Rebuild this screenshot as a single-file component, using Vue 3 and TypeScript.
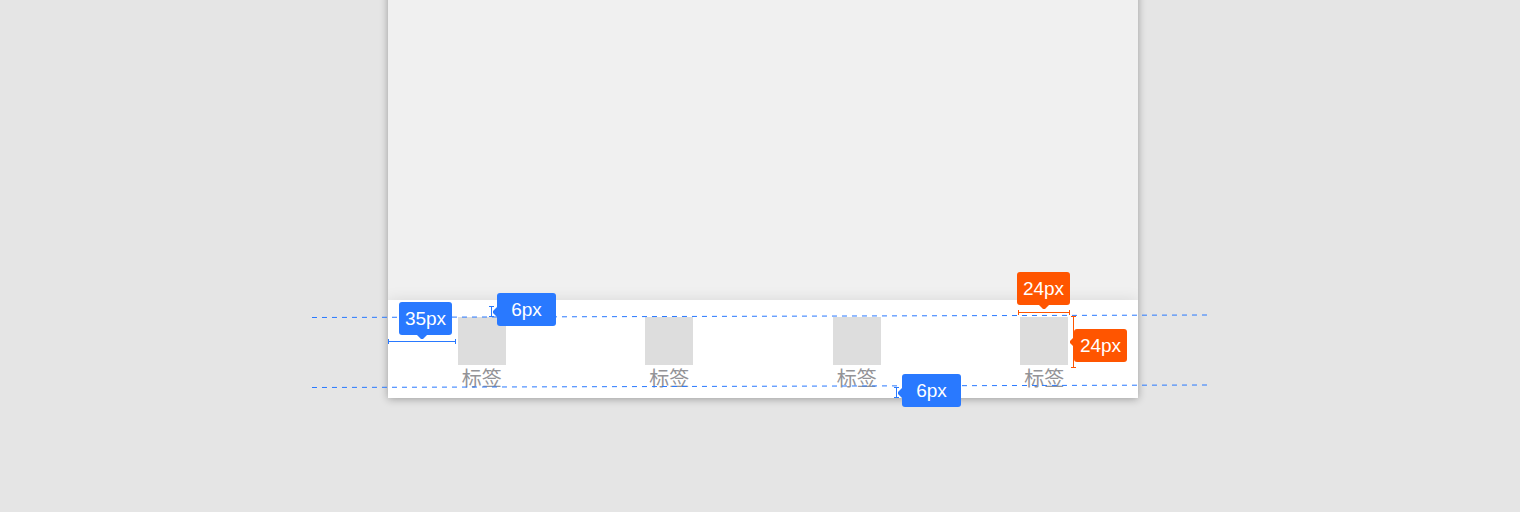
<script setup lang="ts">
interface Tab { id: number; label: string }
interface Callout { id: string; text: string; place: string; tone: string; arrow: string }

const tabs: Tab[] = [1, 2, 3, 4].map((id) => ({ id, label: '标签' }))

const callouts: Callout[] = [
  { id: 'inset', text: '35px', place: 'at-inset', tone: 'blue', arrow: 'down' },
  { id: 'top', text: '6px', place: 'at-top', tone: 'blue wide', arrow: 'left' },
  { id: 'bottom', text: '6px', place: 'at-bottom', tone: 'blue wide', arrow: 'left' },
  { id: 'width', text: '24px', place: 'at-width', tone: 'orange', arrow: 'down' },
  { id: 'height', text: '24px', place: 'at-height', tone: 'orange', arrow: 'left low' },
]
</script>

<template>
  <main class="stage">
    <section class="phone">
      <div class="screen"></div>
      <nav class="tabbar">
        <a v-for="tab in tabs" :key="tab.id" class="tab" href="#">
          <span class="icon"></span>
          <span class="label">{{ tab.label }}</span>
        </a>
      </nav>
      <svg class="guides" width="896" height="140" viewBox="0 0 896 140" fill="none" aria-hidden="true">
        <g class="dash">
          <path d="M0 57.5 L895 55" />
          <path d="M0 127.5 L895 125" />
        </g>
        <g class="blue-line">
          <path d="M76.5 79v5M76 81.5h68M143.5 79v5" />
          <path d="M177 46.5h5M179.5 46v11M177 56.5h5" />
          <path d="M582 127.5h5M584.5 127v11M582 137.5h5" />
        </g>
        <g class="orange-line">
          <path d="M706.5 50v5M706 52.5h52M757.5 50v5" />
          <path d="M759 56.5h5M761.5 56v52M759 107.5h5" />
        </g>
      </svg>
      <span v-for="c in callouts" :key="c.id" class="callout" :class="[c.place, c.tone, c.arrow]">{{ c.text }}</span>
    </section>
  </main>
</template>

<style>
body {
  margin: 0;
  background: #e5e5e5;
}
</style>

<style scoped>
.stage {
  display: flex;
  justify-content: center;
  min-height: 100vh;
  padding-left: 6px;
  box-sizing: border-box;
  align-items: flex-start;
  overflow: hidden;
  background: #e5e5e5;
  font-family: "Liberation Sans", "Noto Sans CJK SC", sans-serif;
}
.phone {
  position: relative;
  z-index: 0;
  flex: 0 1 750px;
}
/* The frame runs past the top edge so its shadow does not fade there. */
.phone::before {
  content: "";
  position: absolute;
  z-index: -1;
  inset: -20px 0 0;
  background: #f0f0f0;
  box-shadow: 0 1px 8px rgba(0, 0, 0, 0.32);
}
.screen {
  height: 300px;
}
.tabbar {
  display: flex;
  padding: 17px 0 7px;
  background: #fff;
  box-shadow: 0 0 14px rgba(0, 0, 0, 0.1);
  clip-path: inset(-16px 0 0 0);
}
.tab {
  flex: 1;
  display: flex;
  flex-direction: column;
  align-items: center;
  color: #939397;
  text-decoration: none;
}
.icon {
  width: 48px;
  height: 48px;
  background: #ddd;
}
.label {
  font-family: "Noto Sans CJK SC", sans-serif;
  font-size: 20px;
  line-height: 26px;
}
.guides {
  position: absolute;
  left: -76px;
  top: 260px;
}
.dash {
  stroke: #2979ff;
  stroke-dasharray: 5 5;
}
.blue-line {
  stroke: #2979ff;
}
.orange-line {
  stroke: #ff5500;
}
.callout {
  position: absolute;
  width: 53px;
  height: 33px;
  border-radius: 3px;
  color: #fff;
  font-size: 19px;
  line-height: 34px;
  text-align: center;
}
.wide {
  width: 59px;
}
.blue {
  background: #2979ff;
}
.orange {
  background: #ff5500;
}
.callout::after {
  content: "";
  position: absolute;
  background: inherit;
}
.down::after {
  top: 100%;
  left: 18px;
  width: 10px;
  height: 4px;
  clip-path: polygon(0 0, 100% 0, 60% 100%, 40% 100%);
}
.left::after {
  right: 100%;
  top: 14px;
  width: 4px;
  height: 10px;
  clip-path: polygon(100% 0, 100% 100%, 0 60%, 0 40%);
}
.at-width::after {
  left: 22px;
}
.low::after {
  top: 8px;
}
.at-inset {
  left: 11px;
  top: 302px;
}
.at-top {
  left: 109px;
  top: 293px;
}
.at-bottom {
  left: 514px;
  top: 374px;
}
.at-width {
  left: 629px;
  top: 272px;
}
.at-height {
  left: 686px;
  top: 329px;
}
</style>
